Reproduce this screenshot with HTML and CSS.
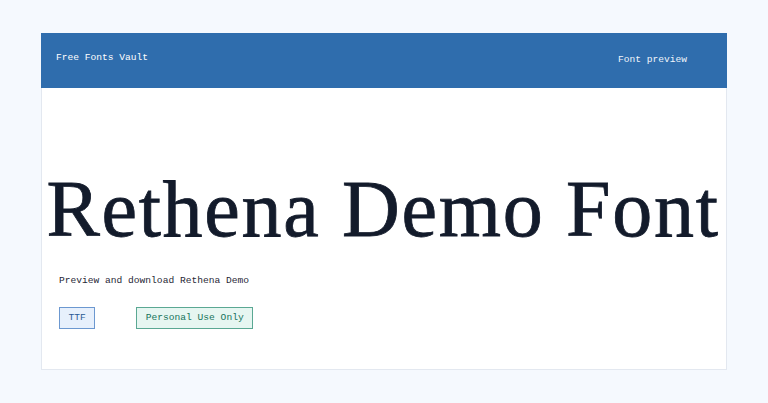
FILE: index.html
```html
<!DOCTYPE html>
<html lang="en">
<head>
<meta charset="utf-8">
<title>Rethena Demo Font</title>
<link rel="stylesheet" href="styles.css">
</head>
<body>
<main class="card">
  <header class="topbar">
    <div class="brand">Free Fonts Vault</div>
    <nav class="nav">Font preview</nav>
  </header>
  <section class="content">
    <h1 class="title">Rethena Demo Font</h1>
    <p class="desc">Preview and download Rethena Demo</p>
    <div class="badges">
      <span class="badge badge-format">TTF</span>
      <span class="badge badge-license">Personal Use Only</span>
    </div>
  </section>
</main>
</body>
</html>
```
FILE: styles.css
```css
html, body {
  margin: 0;
  padding: 0;
}
body {
  background: #f5f9fe;
  padding: 33px 41px;
  font-family: "Liberation Mono", "DejaVu Sans Mono", monospace;
}
.card {
  background: #ffffff;
  border: 1px solid #e3e8f0;
  border-top: none;
  height: 337px;
  box-sizing: border-box;
}
.topbar {
  background: #2f6dad;
  height: 55px;
  display: flex;
  justify-content: space-between;
  align-items: center;
  padding: 0 40px 0 15px;
  color: #ffffff;
  font-size: 9.6px;
  margin: 0 -1px;
}
.brand {
  margin-top: -7px;
}
.nav {
  margin-top: -3px;
  color: #f0f5fb;
}
.content {
  padding: 81px 16px 0 16px;
}
.title {
  margin: 0 -12px 0 -14px;
  font-family: "Liberation Serif", "Times New Roman", serif;
  font-weight: 400;
  font-size: 80px;
  line-height: 80px;
  letter-spacing: 1.7px;
  color: #131b2b;
  -webkit-text-stroke: 0.8px #131b2b;
  text-align: center;
  white-space: nowrap;
}
.desc {
  margin: 26px 0 0 1px;
  font-size: 9.6px;
  line-height: 12px;
  color: #1f2736;
}
.badges {
  display: flex;
  gap: 41px;
  margin-top: 20px;
  padding-left: 1px;
}
.badge {
  display: inline-block;
  font-size: 9.6px;
  line-height: 20px;
  padding: 0 8.5px;
  border: 1px solid;
}
.badge-format {
  background: #e7f0fc;
  border-color: #6c98d0;
  color: #2a5a95;
}
.badge-license {
  background: #e6f6f1;
  border-color: #5aa893;
  color: #15735a;
}
```
